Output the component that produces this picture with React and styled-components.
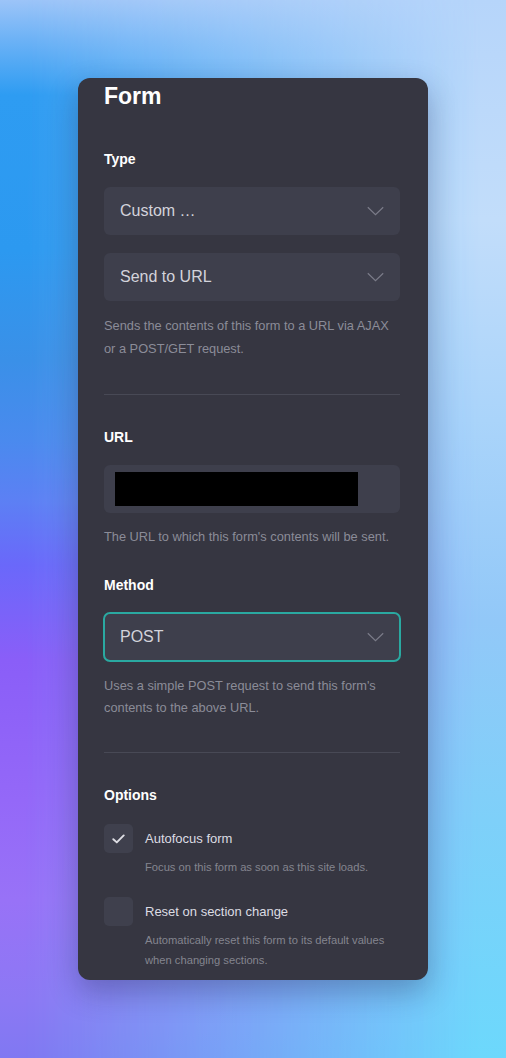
import React from "react";
import styled, { createGlobalStyle } from "styled-components";

const Global = createGlobalStyle`
  html, body { margin: 0; padding: 0; }
  body {
    font-family: "Liberation Sans", Arial, sans-serif;
    -webkit-font-smoothing: antialiased;
  }
  * { box-sizing: border-box; }
`;

const Page = styled.div`
  width: 506px;
  height: 1058px;
  overflow: hidden;
  background: linear-gradient(
    to bottom,
    #9cc4f8 0px,
    #6cb2f6 40px,
    #2e9cf2 95px,
    #2c99f0 250px,
    #3a90e8 360px,
    #4a8aee 440px,
    #5c80f4 500px,
    #6a68fa 565px,
    #8a5ef8 660px,
    #9468f8 800px,
    #9872f7 900px,
    #8c78f4 1000px,
    #8078f2 1058px
  );
`;

const Tint = styled.div`
  height: 100%;
  background: linear-gradient(
    to bottom,
    #b6d5fa 0px,
    #c2ddfa 220px,
    #aad4fa 420px,
    #92c8f8 620px,
    #7ed0f9 820px,
    #6cd8fc 1058px
  );
  -webkit-mask-image: linear-gradient(to right, rgba(0,0,0,0) 5%, rgba(0,0,0,1) 95%);
  mask-image: linear-gradient(to right, rgba(0,0,0,0) 5%, rgba(0,0,0,1) 95%);
`;

const Stage = styled.div`
  position: relative;
  margin-top: -1058px;
  height: 1058px;
  padding: 78px 0 0 78px;
`;

const Card = styled.div`
  width: 350px;
  height: 902px;
  background: #363641;
  border-radius: 12px;
  padding: 4px 28px 0 26px;
  box-shadow: 0 12px 30px rgba(20, 20, 60, 0.3);
  overflow: hidden;
`;

const Title = styled.h1`
  margin: 0;
  font-size: 23px;
  line-height: 28px;
  font-weight: 700;
  color: #ffffff;
`;

const Label = styled.div`
  margin-top: ${(p) => p.$top}px;
  margin-bottom: ${(p) => p.$bottom || 19}px;
  font-size: 14px;
  line-height: 17px;
  font-weight: 700;
  color: #ffffff;
`;

const Field = styled.div`
  height: 48px;
  margin-top: ${(p) => p.$top || 0}px;
  border-radius: 6px;
  background: #3e3f4c;
  display: flex;
  align-items: center;
  justify-content: space-between;
  padding: 0 16px;
  outline: ${(p) => (p.$focused ? "2px solid #2aa9a1" : "none")};
  outline-offset: -1px;
`;

const FieldText = styled.span`
  font-size: 16px;
  color: #d3d3db;
`;

const InputField = styled(Field)`
  padding: 0 11px;
  justify-content: flex-start;
`;

const Redacted = styled.div`
  width: 243px;
  height: 34px;
  background: #000;
`;

const Help = styled.p`
  margin: ${(p) => p.$top}px 0 0;
  font-size: 12.8px;
  line-height: ${(p) => p.$lh || 23}px;
  color: #8b8c98;
`;

const Divider = styled.hr`
  margin: ${(p) => p.$top}px 0 0;
  border: 0;
  height: 1px;
  background: #484955;
`;

const Option = styled.div`
  display: grid;
  grid-template-columns: 29px 1fr;
  column-gap: 12px;
  margin-top: ${(p) => p.$top}px;
`;

const Box = styled.div`
  width: 29px;
  height: 29px;
  border-radius: 5px;
  background: #3f404d;
  display: flex;
  align-items: center;
  justify-content: center;
`;

const OptionLabel = styled.div`
  font-size: 13px;
  line-height: 29px;
  color: #dcdce3;
`;

const OptionHelp = styled.div`
  margin-top: 4px;
  font-size: 11.2px;
  line-height: 20px;
  color: #84858f;
`;

const Chevron = () => (
  <svg width="17" height="10" viewBox="0 0 17 10" fill="none">
    <path d="M0.8 1.2 L8.5 8.6 L16.2 1.2" stroke="#7b7c89" strokeWidth="1.2" />
  </svg>
);

const Check = () => (
  <svg width="13" height="10" viewBox="0 0 13 10" fill="none">
    <path d="M1.3 5.2 L4.8 8.4 L11.7 1.4" stroke="#dedee4" strokeWidth="1.9" strokeLinecap="round" strokeLinejoin="round" />
  </svg>
);

const Select = ({ value, top, focused }) => (
  <Field $top={top} $focused={focused}>
    <FieldText>{value}</FieldText>
    <Chevron />
  </Field>
);

export default function App() {
  return (
    <>
      <Global />
      <Page>
        <Tint />
        <Stage>
          <Card>
            <Title>Form</Title>

            <Label $top={41}>Type</Label>
            <Select value="Custom …" />
            <Select value="Send to URL" top={18} />
            <Help $top={12.5}>
              Sends the contents of this form to a URL via AJAX or a POST/GET request.
            </Help>

            <Divider $top={34} />

            <Label $top={34}>URL</Label>
            <InputField>
              <Redacted />
            </InputField>
            <Help $top={12.5}>The URL to which this form's contents will be sent.</Help>

            <Label $top={29}>Method</Label>
            <Select value="POST" focused />
            <Help $top={14} $lh={22}>
              Uses a simple POST request to send this form's contents to the above URL.
            </Help>

            <Divider $top={33} />

            <Label $top={34} $bottom={20}>Options</Label>
            <Option $top={0}>
              <Box>
                <Check />
              </Box>
              <div>
                <OptionLabel>Autofocus form</OptionLabel>
                <OptionHelp>Focus on this form as soon as this site loads.</OptionHelp>
              </div>
            </Option>
            <Option $top={20}>
              <Box />
              <div>
                <OptionLabel>Reset on section change</OptionLabel>
                <OptionHelp>
                  Automatically reset this form to its default values when changing sections.
                </OptionHelp>
              </div>
            </Option>
          </Card>
        </Stage>
      </Page>
    </>
  );
}
